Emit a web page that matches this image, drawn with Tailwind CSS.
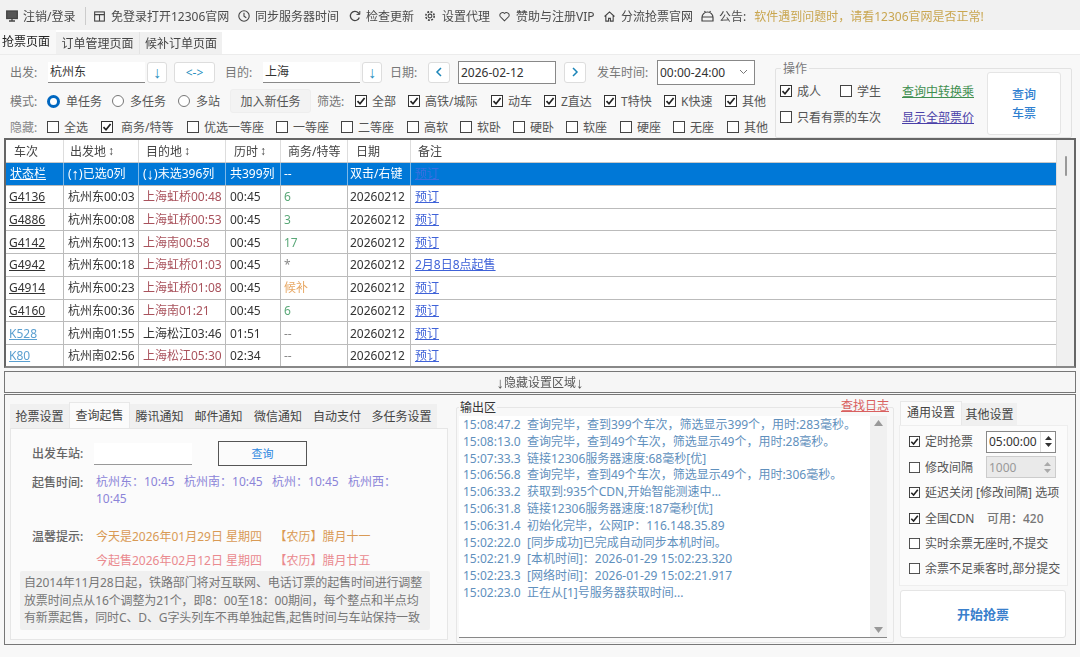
<!DOCTYPE html>
<html lang="zh">
<head>
<meta charset="utf-8">
<script src="https://cdn.jsdelivr.net/npm/@tailwindcss/browser@4"></script>
</head>
<body class="w-[1080px] h-[657px] overflow-hidden bg-[#f8f8f8] text-[12px] leading-[17px] text-[#444] font-['Noto_Sans','Noto_Sans_CJK_SC',sans-serif] blur-[0.45px]">
<svg class="hidden">
<symbol id="on" viewBox="0 0 12 12"><rect x=".5" y=".5" width="11" height="11" fill="#fff" stroke="#333"/><path d="M2.5 6.2 5 8.8 9.6 3" fill="none" stroke="#222" stroke-width="1.7"/></symbol>
<symbol id="off" viewBox="0 0 12 12"><rect x=".5" y=".5" width="11" height="11" fill="#fff" stroke="#444"/></symbol>
</svg>

<!-- toolbar -->
<div class="h-[30px] bg-[#f1f1f1] flex items-center pl-[6px] pt-[2px] text-[#4a4a4a]">
  <span class="w-[79px] flex items-center gap-[5px]"><svg class="w-[12px] h-[12px]" viewBox="0 0 12 12" fill="none" stroke="#444" stroke-width="1.3"><rect x=".7" y="1" width="10.6" height="7.5" fill="#555"/><path d="M3 11h6M6 8.5V11"/></svg>注销/登录</span>
  <span class="w-px h-[18px] bg-[#ccc]"></span>
  <span class="ml-[8px] w-[144px] flex items-center gap-[6px]"><svg class="w-[11px] h-[11px]" viewBox="0 0 12 12" fill="none" stroke="#444" stroke-width="1.2"><rect x=".7" y="1" width="10.6" height="10"/><path d="M.7 4h10.6M6 4v7"/></svg>免登录打开12306官网</span>
  <span class="w-[111px] flex items-center gap-[5px]"><svg class="w-[12px] h-[12px]" viewBox="0 0 12 12" fill="none" stroke="#444" stroke-width="1.1"><circle cx="6" cy="6" r="5.2"/><path d="M6 2.8V6.3l2.3 1.4"/></svg>同步服务器时间</span>
  <span class="w-[75px] flex items-center gap-[5px]"><svg class="w-[12px] h-[12px]" viewBox="0 0 12 12" fill="none" stroke="#444" stroke-width="1.3"><path d="M10.3 7.5A4.6 4.6 0 1 1 9.3 2.8L10.5 4"/><path d="M10.8 1v3.4H7.5" stroke-width="1"/></svg>检查更新</span>
  <span class="w-[75px] flex items-center gap-[6px]"><svg class="w-[12px] h-[12px]" viewBox="0 0 12 12" fill="none" stroke="#444" stroke-width="1.1"><circle cx="6" cy="6" r="1.9"/><circle cx="6" cy="6" r="4.2" stroke-width="1.6" stroke-dasharray="1.9 1.4"/></svg>设置代理</span>
  <span class="w-[105px] flex items-center gap-[6px]"><svg class="w-[11px] h-[11px]" viewBox="0 0 12 12" fill="none" stroke="#444" stroke-width="1.1"><path d="M6 10.8 1.3 6A2.9 2.9 0 0 1 6 2.7 2.9 2.9 0 0 1 10.7 6Z"/></svg>赞助与注册VIP</span>
  <span class="w-[97px] flex items-center gap-[6px]"><svg class="w-[11px] h-[11px]" viewBox="0 0 12 12" fill="none" stroke="#444" stroke-width="1.2"><path d="M.6 6 6 1l5.4 5M2 5v6h3V8h2v3h3V5"/></svg>分流抢票官网</span>
  <span class="flex items-center gap-[5px]"><svg class="w-[13px] h-[12px]" viewBox="0 0 13 12" fill="none" stroke="#444" stroke-width="1.2"><path d="M1 7.5a5.5 5.5 0 0 1 11 0V11H1ZM1 7h11M4.5 2.5 3.5 1M8.5 2.5 9.5 1"/></svg>公告:</span>
  <span class="ml-[8px] text-[#c9a650]">软件遇到问题时，请看12306官网是否正常!</span>
</div>

<!-- page tabs -->
<div class="h-[24px] bg-white flex items-end">
  <span class="w-[56px] h-[24px] bg-[#f8f8f8] pl-[2px] pb-[2px] flex items-center text-[#222]">抢票页面</span>
  <span class="w-[84px] h-[22px] bg-[#f0f0f0] flex items-center justify-center text-[#444] border-r border-[#e3e3e3]">订单管理页面</span>
  <span class="w-[82px] h-[22px] bg-[#f0f0f0] flex items-center justify-center text-[#444]">候补订单页面</span>
</div>

<!-- query panel -->
<div class="h-[84px] relative bg-[#f8f8f8] border-t border-[#ececec] pt-[6px] text-[#555]">
  <div class="h-[22px] flex items-center pl-[10px]">
    <span class="w-[38px] text-[#777]">出发:</span>
    <span class="w-[97px] h-[21px] bg-white border-b border-[#888] px-[2px] flex items-center text-[#333]">杭州东</span>
    <span class="ml-[2px] w-[20px] h-[21px] bg-white border border-[#ddd] rounded-[3px] flex items-center justify-center text-[#2a8fc0] text-[16px] font-['Liberation_Sans']">↓</span>
    <span class="ml-[7px] w-[41px] h-[21px] bg-white border border-[#ddd] rounded-[3px] flex items-center justify-center text-[#2a8fc0]">&lt;-&gt;</span>
    <span class="ml-[10px] w-[38px] text-[#777]">目的:</span>
    <span class="w-[97px] h-[21px] bg-white border-b border-[#888] px-[2px] flex items-center text-[#333]">上海</span>
    <span class="ml-[2px] w-[20px] h-[21px] bg-white border border-[#ddd] rounded-[3px] flex items-center justify-center text-[#2a8fc0] text-[16px] font-['Liberation_Sans']">↓</span>
    <span class="ml-[8px] w-[38px] text-[#777]">日期:</span>
    <span class="w-[22px] h-[21px] bg-white border border-[#ddd] rounded-[3px] flex items-center justify-center"><svg class="w-[8px] h-[10px]" viewBox="0 0 8 10" fill="none" stroke="#1b85b8" stroke-width="1.5"><path d="M6 1 2 5l4 4"/></svg></span>
    <span class="ml-[8px] w-[98px] h-[23px] bg-white border border-[#888] px-[2px] flex items-center text-[#333]">2026-02-12</span>
    <span class="ml-[8px] w-[22px] h-[21px] bg-white border border-[#ddd] rounded-[3px] flex items-center justify-center"><svg class="w-[8px] h-[10px]" viewBox="0 0 8 10" fill="none" stroke="#1b85b8" stroke-width="1.5"><path d="m2 1 4 4-4 4"/></svg></span>
    <span class="ml-[11px] w-[60px] text-[#777]">发车时间:</span>
    <span class="w-[98px] h-[25px] bg-white border border-[#888] px-[2px] flex items-center justify-between pr-[6px] text-[#333]">00:00-24:00<svg class="w-[9px] h-[6px]" viewBox="0 0 9 6" fill="none" stroke="#777"><path d="m1 1 3.5 3.5L8 1"/></svg></span>
  </div>

  <div class="h-[24px] mt-[6px] flex items-center pl-[10px]">
    <span class="w-[37px] text-[#777]">模式:</span>
    <span class="w-[65px] flex items-center gap-[6px]"><span class="w-[13px] h-[13px] rounded-full border-[3.5px] border-[#0067c0] bg-white"></span>单任务</span>
    <span class="w-[66px] flex items-center gap-[6px]"><span class="w-[12px] h-[12px] rounded-full border border-[#777] bg-white"></span>多任务</span>
    <span class="w-[52px] flex items-center gap-[6px]"><span class="w-[12px] h-[12px] rounded-full border border-[#777] bg-white"></span>多站</span>
    <span class="w-[81px] h-[24px] bg-[#f3f3f3] rounded-[3px] border border-[#eee] flex items-center justify-center text-[#555]">加入新任务</span>
    <span class="ml-[6px] w-[38px] text-[#777]">筛选:</span>
    <span class="w-[53px] flex items-center gap-[5px]"><svg class="w-[12px] h-[12px]"><use href="#on"/></svg>全部</span>
    <span class="w-[83px] flex items-center gap-[5px]"><svg class="w-[12px] h-[12px]"><use href="#on"/></svg>高铁/城际</span>
    <span class="w-[53px] flex items-center gap-[5px]"><svg class="w-[12px] h-[12px]"><use href="#on"/></svg>动车</span>
    <span class="w-[60px] flex items-center gap-[5px]"><svg class="w-[12px] h-[12px]"><use href="#on"/></svg>Z直达</span>
    <span class="w-[60px] flex items-center gap-[5px]"><svg class="w-[12px] h-[12px]"><use href="#on"/></svg>T特快</span>
    <span class="w-[61px] flex items-center gap-[5px]"><svg class="w-[12px] h-[12px]"><use href="#on"/></svg>K快速</span>
    <span class="flex items-center gap-[5px]"><svg class="w-[12px] h-[12px]"><use href="#on"/></svg>其他</span>
  </div>

  <div class="h-[22px] mt-[3px] flex items-center pl-[10px]">
    <span class="w-[37px] text-[#888]">隐藏:</span>
    <span class="w-[54px] flex items-center gap-[5px]"><svg class="w-[12px] h-[12px]"><use href="#off"/></svg>全选</span>
    <span class="w-[86px] flex items-center gap-[8px]"><svg class="w-[12px] h-[12px]"><use href="#on"/></svg>商务/特等</span>
    <span class="w-[89px] flex items-center gap-[5px]"><svg class="w-[12px] h-[12px]"><use href="#off"/></svg>优选一等座</span>
    <span class="w-[65px] flex items-center gap-[5px]"><svg class="w-[12px] h-[12px]"><use href="#off"/></svg>一等座</span>
    <span class="w-[66px] flex items-center gap-[5px]"><svg class="w-[12px] h-[12px]"><use href="#off"/></svg>二等座</span>
    <span class="w-[53px] flex items-center gap-[5px]"><svg class="w-[12px] h-[12px]"><use href="#off"/></svg>高软</span>
    <span class="w-[53px] flex items-center gap-[5px]"><svg class="w-[12px] h-[12px]"><use href="#off"/></svg>软卧</span>
    <span class="w-[53px] flex items-center gap-[5px]"><svg class="w-[12px] h-[12px]"><use href="#off"/></svg>硬卧</span>
    <span class="w-[54px] flex items-center gap-[5px]"><svg class="w-[12px] h-[12px]"><use href="#off"/></svg>软座</span>
    <span class="w-[53px] flex items-center gap-[5px]"><svg class="w-[12px] h-[12px]"><use href="#off"/></svg>硬座</span>
    <span class="w-[54px] flex items-center gap-[5px]"><svg class="w-[12px] h-[12px]"><use href="#off"/></svg>无座</span>
    <span class="flex items-center gap-[5px]"><svg class="w-[12px] h-[12px]"><use href="#off"/></svg>其他</span>
  </div>

  <!-- 操作 group box -->
  <div class="absolute left-[775px] top-[13px] w-[297px] h-[70px] border border-[#e2e2e2] rounded-[2px] flex">
    <span class="absolute left-[5px] -top-[9px] bg-[#f8f8f8] px-[2px] text-[#777]">操作</span>
    <div class="w-[206px] pl-[4px] pt-[9px]">
      <div class="h-[26px] flex items-center">
        <span class="w-[60px] flex items-center gap-[5px]"><svg class="w-[12px] h-[12px]"><use href="#on"/></svg>成人</span>
        <span class="w-[62px] flex items-center gap-[5px]"><svg class="w-[12px] h-[12px]"><use href="#off"/></svg>学生</span>
        <span class="text-[#3f8f50] underline">查询中转换乘</span>
      </div>
      <div class="h-[26px] flex items-center">
        <span class="w-[122px] flex items-center gap-[5px]"><svg class="w-[12px] h-[12px]"><use href="#off"/></svg>只看有票的车次</span>
        <span class="text-[#4a3fa8] underline">显示全部票价</span>
      </div>
    </div>
    <div class="w-[74px] h-[63px] mt-[3px] ml-[5px] bg-white border border-[#e5e5e5] rounded-[3px] flex items-center justify-center text-center text-[#2f7fd0] font-medium leading-[19px]">查询<br>车票</div>
  </div>
</div>

<!-- train table -->
<div class="mx-[4px] h-[230px] border-2 border-[#666] border-b-[#888] bg-white flex overflow-hidden">
  <div class="w-[1050px] text-[#333]">
    <div class="h-[23px] grid grid-cols-[58px_75px_87px_55px_67px_63px_1fr] items-center border-b border-[#c8c8c8] text-[#444]">
      <span class="h-full pl-[8px] flex items-center border-r border-[#ddd]">车次</span>
      <span class="h-full pl-[6px] flex items-center border-r border-[#ddd]">出发地 <span class="font-['Liberation_Sans'] font-bold ml-[2px]">↕</span></span>
      <span class="h-full pl-[7px] flex items-center border-r border-[#ddd]">目的地 <span class="font-['Liberation_Sans'] font-bold ml-[2px]">↕</span></span>
      <span class="h-full pl-[8px] flex items-center border-r border-[#ddd]">历时 <span class="font-['Liberation_Sans'] font-bold ml-[2px]">↕</span></span>
      <span class="h-full pl-[7px] flex items-center border-r border-[#ddd]">商务/特等</span>
      <span class="h-full pl-[8px] flex items-center border-r border-[#ddd]">日期</span>
      <span class="h-full pl-[7px] flex items-center">备注</span>
    </div>
    <div class="h-[22.75px] grid grid-cols-[58px_75px_87px_55px_67px_63px_1fr] bg-[#0078d7] text-white border-b border-[#bbb]">
      <span class="pl-[4px] flex items-center border-r border-[#7db8e8] underline">状态栏</span>
      <span class="pl-[4px] flex items-center border-r border-[#7db8e8]">(<span class="font-['Liberation_Sans'] text-[15px]">↑</span>)已选0列</span>
      <span class="pl-[4px] flex items-center border-r border-[#7db8e8]">(<span class="font-['Liberation_Sans'] text-[15px]">↓</span>)未选396列</span>
      <span class="pl-[4px] flex items-center border-r border-[#7db8e8]">共399列</span>
      <span class="pl-[3px] flex items-center border-r border-[#7db8e8]">--</span>
      <span class="pl-[2px] flex items-center border-r border-[#7db8e8]">双击/右键</span>
      <span class="pl-[4px] flex items-center text-[#3a6fe0] underline">预订</span>
    </div>
    <div class="h-[22.75px] grid grid-cols-[58px_75px_87px_55px_67px_63px_1fr] border-b border-[#bbb]">
      <span class="pl-[3px] flex items-center border-r border-[#bbb] underline">G4136</span><span class="pl-[4px] flex items-center border-r border-[#bbb]">杭州东00:03</span><span class="pl-[4px] flex items-center border-r border-[#bbb] text-[#a9525c]">上海虹桥00:48</span><span class="pl-[4px] flex items-center border-r border-[#bbb]">00:45</span><span class="pl-[3px] flex items-center border-r border-[#bbb] text-[#5aa878]">6</span><span class="pl-[2px] flex items-center border-r border-[#bbb]">20260212</span><span class="pl-[4px] flex items-center text-[#3f62d8] underline">预订</span>
    </div>
    <div class="h-[22.75px] grid grid-cols-[58px_75px_87px_55px_67px_63px_1fr] border-b border-[#bbb]">
      <span class="pl-[3px] flex items-center border-r border-[#bbb] underline">G4886</span><span class="pl-[4px] flex items-center border-r border-[#bbb]">杭州东00:08</span><span class="pl-[4px] flex items-center border-r border-[#bbb] text-[#a9525c]">上海虹桥00:53</span><span class="pl-[4px] flex items-center border-r border-[#bbb]">00:45</span><span class="pl-[3px] flex items-center border-r border-[#bbb] text-[#5aa878]">3</span><span class="pl-[2px] flex items-center border-r border-[#bbb]">20260212</span><span class="pl-[4px] flex items-center text-[#3f62d8] underline">预订</span>
    </div>
    <div class="h-[22.75px] grid grid-cols-[58px_75px_87px_55px_67px_63px_1fr] border-b border-[#bbb]">
      <span class="pl-[3px] flex items-center border-r border-[#bbb] underline">G4142</span><span class="pl-[4px] flex items-center border-r border-[#bbb]">杭州东00:13</span><span class="pl-[4px] flex items-center border-r border-[#bbb] text-[#a9525c]">上海南00:58</span><span class="pl-[4px] flex items-center border-r border-[#bbb]">00:45</span><span class="pl-[3px] flex items-center border-r border-[#bbb] text-[#5aa878]">17</span><span class="pl-[2px] flex items-center border-r border-[#bbb]">20260212</span><span class="pl-[4px] flex items-center text-[#3f62d8] underline">预订</span>
    </div>
    <div class="h-[22.75px] grid grid-cols-[58px_75px_87px_55px_67px_63px_1fr] border-b border-[#bbb]">
      <span class="pl-[3px] flex items-center border-r border-[#bbb] underline">G4942</span><span class="pl-[4px] flex items-center border-r border-[#bbb]">杭州东00:18</span><span class="pl-[4px] flex items-center border-r border-[#bbb] text-[#a9525c]">上海虹桥01:03</span><span class="pl-[4px] flex items-center border-r border-[#bbb]">00:45</span><span class="pl-[3px] flex items-center border-r border-[#bbb] text-[#888]">*</span><span class="pl-[2px] flex items-center border-r border-[#bbb]">20260212</span><span class="pl-[4px] flex items-center text-[#3f62d8] underline">2月8日8点起售</span>
    </div>
    <div class="h-[22.75px] grid grid-cols-[58px_75px_87px_55px_67px_63px_1fr] border-b border-[#bbb]">
      <span class="pl-[3px] flex items-center border-r border-[#bbb] underline">G4914</span><span class="pl-[4px] flex items-center border-r border-[#bbb]">杭州东00:23</span><span class="pl-[4px] flex items-center border-r border-[#bbb] text-[#a9525c]">上海虹桥01:08</span><span class="pl-[4px] flex items-center border-r border-[#bbb]">00:45</span><span class="pl-[3px] flex items-center border-r border-[#bbb] text-[#e8a864]">候补</span><span class="pl-[2px] flex items-center border-r border-[#bbb]">20260212</span><span class="pl-[4px] flex items-center text-[#3f62d8] underline">预订</span>
    </div>
    <div class="h-[22.75px] grid grid-cols-[58px_75px_87px_55px_67px_63px_1fr] border-b border-[#bbb]">
      <span class="pl-[3px] flex items-center border-r border-[#bbb] underline">G4160</span><span class="pl-[4px] flex items-center border-r border-[#bbb]">杭州东00:36</span><span class="pl-[4px] flex items-center border-r border-[#bbb] text-[#a9525c]">上海南01:21</span><span class="pl-[4px] flex items-center border-r border-[#bbb]">00:45</span><span class="pl-[3px] flex items-center border-r border-[#bbb] text-[#5aa878]">6</span><span class="pl-[2px] flex items-center border-r border-[#bbb]">20260212</span><span class="pl-[4px] flex items-center text-[#3f62d8] underline">预订</span>
    </div>
    <div class="h-[22.75px] grid grid-cols-[58px_75px_87px_55px_67px_63px_1fr] border-b border-[#bbb]">
      <span class="pl-[3px] flex items-center border-r border-[#bbb] underline text-[#5a9fd0]">K528</span><span class="pl-[4px] flex items-center border-r border-[#bbb]">杭州南01:55</span><span class="pl-[4px] flex items-center border-r border-[#bbb]">上海松江03:46</span><span class="pl-[4px] flex items-center border-r border-[#bbb]">01:51</span><span class="pl-[3px] flex items-center border-r border-[#bbb] text-[#888]">--</span><span class="pl-[2px] flex items-center border-r border-[#bbb]">20260212</span><span class="pl-[4px] flex items-center text-[#3f62d8] underline">预订</span>
    </div>
    <div class="h-[22.75px] grid grid-cols-[58px_75px_87px_55px_67px_63px_1fr] border-b border-[#bbb]">
      <span class="pl-[3px] flex items-center border-r border-[#bbb] underline text-[#5a9fd0]">K80</span><span class="pl-[4px] flex items-center border-r border-[#bbb]">杭州南02:56</span><span class="pl-[4px] flex items-center border-r border-[#bbb] text-[#a9525c]">上海松江05:30</span><span class="pl-[4px] flex items-center border-r border-[#bbb]">02:34</span><span class="pl-[3px] flex items-center border-r border-[#bbb] text-[#888]">--</span><span class="pl-[2px] flex items-center border-r border-[#bbb]">20260212</span><span class="pl-[4px] flex items-center text-[#3f62d8] underline">预订</span>
    </div>
  </div>
  <div class="flex-1 bg-[#f0f0f0] border-l border-[#ddd] pt-[16px] flex justify-center"><span class="w-[2px] h-[20px] bg-[#999] rounded-full"></span></div>
</div>

<!-- collapse bar -->
<div class="mx-[4px] mt-[3px] h-[22px] border border-[#777] bg-[#f6f6f6] flex items-center justify-center text-[#555]"><span class="font-['Liberation_Sans'] text-[15px]">↓</span>隐藏设置区域<span class="font-['Liberation_Sans'] text-[15px]">↓</span></div>

<!-- bottom panel -->
<div class="mx-[4px] mt-[1px] h-[251px] border border-[#777] bg-[#f8f8f8] flex relative">
  <!-- left tabs -->
  <div class="ml-[5px] mt-[7px] w-[438px]">
    <div class="h-[26px] flex items-end text-[#444]">
      <span class="w-[59px] h-[24px] bg-[#f0f0f0] flex items-center justify-center">抢票设置</span>
      <span class="w-[61px] h-[26px] bg-[#fbfbfb] border border-b-0 border-[#e8e8e8] flex items-center justify-center">查询起售</span>
      <span class="w-[59px] h-[24px] bg-[#f0f0f0] flex items-center justify-center">腾讯通知</span>
      <span class="w-[59px] h-[24px] bg-[#f0f0f0] flex items-center justify-center">邮件通知</span>
      <span class="w-[60px] h-[24px] bg-[#f0f0f0] flex items-center justify-center">微信通知</span>
      <span class="w-[58px] h-[24px] bg-[#f0f0f0] flex items-center justify-center">自动支付</span>
      <span class="w-[71px] h-[24px] bg-[#f0f0f0] flex items-center justify-center">多任务设置</span>
    </div>
    <div class="h-[212px] bg-[#fbfbfb] border border-[#e6e6e6] pl-[21px] pt-[12px]">
      <div class="h-[25px] flex items-center">
        <span class="w-[62px] font-medium text-[#666]">出发车站:</span>
        <span class="w-[98px] h-[22px] bg-white border-b border-[#999]"></span>
        <span class="ml-[26px] w-[89px] h-[25px] border border-[#555] flex items-center justify-center text-[11px] text-[#2b86e0]">查询</span>
      </div>
      <div class="mt-[8px] flex">
        <span class="w-[64px] shrink-0 font-medium text-[#666]">起售时间:</span>
        <p class="w-[310px] text-[#8b84d8] leading-[16.5px] whitespace-pre-wrap">杭州东：10:45   杭州南：10:45   杭州：10:45   杭州西： 10:45</p>
      </div>
      <div class="mt-[21px] flex">
        <span class="w-[64px] shrink-0 font-medium text-[#666]">温馨提示:</span>
        <span class="text-[#d99a55] whitespace-pre">今天是2026年01月29日 星期四    【农历】腊月十一</span>
      </div>
      <p class="ml-[64px] mt-[7px] text-[#ea8a8f] whitespace-pre">今起售2026年02月12日 星期四    【农历】腊月廿五</p>
      <p class="-ml-[12px] mt-[2px] w-[410px] h-[59px] bg-[#f0f0f0] rounded-[2px] px-[4px] pt-[3px] text-[#777] leading-[17.5px] tracking-[-0.13px] whitespace-nowrap">自2014年11月28日起，铁路部门将对互联网、电话订票的起售时间进行调整<br>放票时间点从16个调整为21个，即8：00至18：00期间，每个整点和半点均<br>有新票起售，同时C、D、G字头列车不再单独起售,起售时间与车站保持一致</p>
    </div>
  </div>

  <!-- output group -->
  <div class="ml-[8px] mt-[12px] w-[438px] h-[236px] border border-[#e6e6e6] rounded-[2px] relative px-[2px] pt-[8px]">
    <span class="absolute left-[2px] -top-[9px] bg-[#f8f8f8] px-[1px] text-[#333]">输出区</span>
    <span class="absolute right-[4px] -top-[11px] text-[#d9605f] underline">查找日志</span>
    <div class="w-[428px] h-[222px] bg-white border-b border-[#888] flex">
      <div class="flex-1 pl-[4px] pt-[1px] text-[#5f90bd] leading-[16.8px] whitespace-pre">15:08:47.2  查询完毕，查到399个车次，筛选显示399个，用时:283毫秒。
15:08:13.0  查询完毕，查到49个车次，筛选显示49个，用时:28毫秒。
15:07:33.3  链接12306服务器速度:68毫秒[优]
15:06:56.8  查询完毕，查到49个车次，筛选显示49个，用时:306毫秒。
15:06:33.2  获取到:935个CDN,开始智能测速中...
15:06:31.8  链接12306服务器速度:187毫秒[优]
15:06:31.4  初始化完毕，公网IP：116.148.35.89
15:02:22.0  [同步成功]已完成自动同步本机时间。
15:02:21.9  [本机时间]：2026-01-29 15:02:23.320
15:02:23.3  [网络时间]：2026-01-29 15:02:21.917
15:02:23.0  正在从[1]号服务器获取时间...</div>
      <div class="w-[17px] bg-[#f0f0f0] flex flex-col items-center justify-between py-[4px]">
        <svg class="w-[9px] h-[6px]" viewBox="0 0 9 6" fill="#999"><path d="M4.5 0 9 6H0Z"/></svg>
        <svg class="w-[9px] h-[6px]" viewBox="0 0 9 6" fill="#999"><path d="M4.5 6 0 0h9Z"/></svg>
      </div>
    </div>
  </div>

  <!-- settings -->
  <div class="ml-[5px] mt-[6px] w-[169px] text-[#555]">
    <div class="h-[24px] flex items-end pl-[1px]">
      <span class="w-[62px] h-[24px] pb-[2px] bg-[#fbfbfb] border border-b-0 border-[#e8e8e8] flex items-center justify-center text-[#444]">通用设置</span>
      <span class="w-[55px] h-[22px] bg-[#f0f0f0] flex items-center justify-center text-[#444]">其他设置</span>
    </div>
    <div class="h-[161px] bg-[#fbfbfb] border border-[#eee] pl-[9px] pt-[3px]">
      <div class="h-[25px] flex items-center">
        <span class="w-[77px] flex items-center gap-[5px]"><svg class="w-[11px] h-[11px]"><use href="#on"/></svg>定时抢票</span>
        <span class="w-[70px] h-[22px] bg-white border border-[#888] pl-[2px] flex items-center justify-between text-[#333]">05:00:00
          <span class="w-[15px] h-full flex flex-col items-center justify-center gap-[3px] border-l border-[#ddd]"><svg class="w-[7px] h-[4px]" viewBox="0 0 7 4" fill="#333"><path d="M3.5 0 7 4H0Z"/></svg><svg class="w-[7px] h-[4px]" viewBox="0 0 7 4" fill="#333"><path d="M3.5 4 0 0h7Z"/></svg></span>
        </span>
      </div>
      <div class="h-[26px] flex items-center">
        <span class="w-[77px] flex items-center gap-[5px]"><svg class="w-[11px] h-[11px]"><use href="#off"/></svg>修改间隔</span>
        <span class="w-[70px] h-[22px] bg-[#eaeaea] border border-[#ccc] pl-[2px] flex items-center justify-between text-[#999]">1000
          <span class="w-[15px] h-full flex flex-col items-center justify-center gap-[3px]"><svg class="w-[7px] h-[4px]" viewBox="0 0 7 4" fill="#aaa"><path d="M3.5 0 7 4H0Z"/></svg><svg class="w-[7px] h-[4px]" viewBox="0 0 7 4" fill="#aaa"><path d="M3.5 4 0 0h7Z"/></svg></span>
        </span>
      </div>
      <div class="h-[25px] flex items-center gap-[5px] whitespace-nowrap"><svg class="w-[11px] h-[11px]"><use href="#on"/></svg>延迟关闭 [修改间隔] 选项</div>
      <div class="h-[26px] flex items-center"><span class="w-[78px] flex items-center gap-[5px]"><svg class="w-[11px] h-[11px]"><use href="#on"/></svg>全国CDN</span><span class="text-[#777] font-medium">可用：420</span></div>
      <div class="h-[25px] flex items-center gap-[5px]"><svg class="w-[11px] h-[11px]"><use href="#off"/></svg>实时余票无座时,不提交</div>
      <div class="h-[25px] flex items-center gap-[5px]"><svg class="w-[11px] h-[11px]"><use href="#off"/></svg>余票不足乘客时,部分提交</div>
    </div>
    <div class="mt-[4px] ml-[1px] w-[166px] h-[48px] bg-white border border-[#e5e5e5] rounded-[3px] flex items-center justify-center text-[13px] font-bold text-[#3a80cc]">开始抢票</div>
  </div>
</div>
</body>
</html>
